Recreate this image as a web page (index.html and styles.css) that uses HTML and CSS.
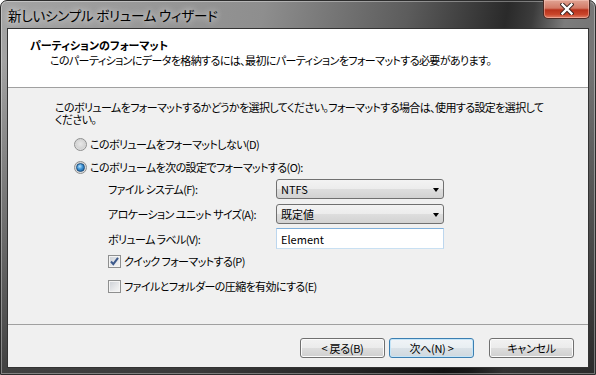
FILE: index.html
```html
<!DOCTYPE html>
<html lang="ja">
<head>
  <meta charset="UTF-8" />
  <title>新しいシンプル ボリューム ウィザード</title>
  <link rel="stylesheet" href="styles.css">
</head>
<body>
  <div class="window">
    <div class="titlebar">
      <span class="title">新しいシンプル ボリューム ウィザード</span>
      <button class="close">
        <svg width="14" height="12" viewBox="0 0 14 12">
          <path d="M2.5 1.5 L11.5 10.5 M11.5 1.5 L2.5 10.5" stroke="#3a2420" stroke-width="4.2" stroke-linecap="square" fill="none"/>
          <path d="M2.5 1.5 L11.5 10.5 M11.5 1.5 L2.5 10.5" stroke="#fff" stroke-width="2.4" stroke-linecap="square" fill="none"/>
        </svg>
      </button>
    </div>

    <div class="client">
      <div class="header">
        <div class="header-title">パーティションのフォーマット</div>
        <div class="header-sub">このパーティションにデータを格納するには、最初にパーティションをフォーマットする必要があります。</div>
      </div>

      <div class="content">
        <p class="intro">このボリュームをフォーマットするかどうかを選択してください。フォーマットする場合は、使用する設定を選択して<br>ください。</p>

        <div class="option"><span class="radio"></span>このボリュームをフォーマットしない(D)</div>
        <div class="option"><span class="radio checked"></span>このボリュームを次の設定でフォーマットする(O):</div>

        <div class="settings">
          <div class="field">
            <span class="field-label">ファイル システム(F):</span>
            <div class="combo">NTFS<span class="arrow"></span></div>
          </div>
          <div class="field">
            <span class="field-label">アロケーション ユニット サイズ(A):</span>
            <div class="combo">既定値<span class="arrow"></span></div>
          </div>
          <div class="field">
            <span class="field-label">ボリューム ラベル(V):</span>
            <div class="textbox">Element</div>
          </div>
        </div>

        <div class="check-row">
          <span class="checkbox">
            <svg width="11" height="11" viewBox="0 0 11 11">
              <path d="M2 5.5 L4.3 8.2 L9 1.8" stroke="#3d5a8c" stroke-width="2" fill="none"/>
            </svg>
          </span>クイック フォーマットする(P)
        </div>
        <div class="check-row"><span class="checkbox"></span>ファイルとフォルダーの圧縮を有効にする(E)</div>
      </div>

      <div class="footer">
        <button class="btn">&lt; 戻る(B)</button>
        <button class="btn default">次へ(N) &gt;</button>
        <button class="btn cancel">キャンセル</button>
      </div>
    </div>
  </div>
</body>
</html>
```

FILE: styles.css
```css
* {
  box-sizing: border-box;
}

body {
  margin: 0;
  font-family: "Noto Sans CJK JP", "Noto Sans", sans-serif;
  font-size: 11px;
  font-feature-settings: "palt";
  letter-spacing: -0.6px;
  color: #000;
  background: #fff;
}

.window {
  width: 596px;
  height: 375px;
  display: flex;
  flex-direction: column;
  padding: 0 6px 6px 6px;
  border: 1px solid #2c2c2c;
  border-radius: 7px 7px 0 0;
  background:
    linear-gradient(180deg, rgba(0,0,0,0) 0, rgba(0,0,0,0) 60px, rgba(0,0,0,0.6) 375px),
    linear-gradient(100deg, #a4a4a4 0%, #8e8e8e 40%, #5c5c5c 62%, #2a2a2a 77%, #3c3c3c 81%, #7c7c7c 86%, #6a6a6a 100%);
  box-shadow: inset 0 0 0 1px rgba(255,255,255,0.35);
}

.titlebar {
  height: 27px;
  display: flex;
  justify-content: space-between;
  align-items: flex-start;
  margin-right: -1px;
}

.title {
  margin-top: 5px;
  padding-left: 1px;
  font-size: 13.5px;
  line-height: 18px;
  letter-spacing: -0.2px;
  color: #000;
  text-shadow: 0 0 6px rgba(255,255,255,0.7), 0 0 10px rgba(255,255,255,0.5);
}

.close {
  width: 47px;
  height: 19px;
  margin-top: -1px;
  padding: 0;
  border: 1px solid #4a2a24;
  border-top: none;
  border-radius: 0 0 5px 5px;
  background: linear-gradient(#e0a494 0, #d37a66 45%, #b8321c 55%, #c9452a 80%, #e0826a 100%);
  box-shadow: inset 0 0 0 1px rgba(255,210,200,0.45);
  display: flex;
  align-items: center;
  justify-content: center;
}

.client {
  flex: 1;
  display: flex;
  flex-direction: column;
  border: 1px solid #333;
  background: #f0f0f0;
}

.header {
  height: 59px;
  padding: 8px 0 0 22px;
  background: #fff;
  border-bottom: 1px solid #a0a0a0;
}

.header-title {
  font-weight: bold;
  line-height: 16px;
  letter-spacing: 0;
}

.header-sub {
  padding-left: 20px;
  line-height: 14px;
}

.content {
  height: 236px;
  padding: 13px 0 0 47px;
}

.intro {
  margin: 0;
  line-height: 12px;
}

.option {
  display: flex;
  align-items: center;
  height: 18px;
  margin: 5px 0 0 19px;
}

.option:first-of-type {
  margin-top: 10px;
}

.radio {
  width: 13px;
  height: 13px;
  margin-right: 3px;
  border: 1px solid #8e8f8f;
  border-radius: 50%;
  background: radial-gradient(circle at 50% 45%, #e8e8e8 0, #d4d4d4 55%, #f4f4f4 100%);
  display: flex;
  align-items: center;
  justify-content: center;
}

.radio.checked::after {
  content: "";
  width: 7px;
  height: 7px;
  border-radius: 50%;
  border: 1px solid #1c4f7e;
  background: radial-gradient(circle at 40% 35%, #b8e4ff 0, #3f93d4 45%, #11508f 100%);
}

.settings {
  display: flex;
  flex-direction: column;
  gap: 5px;
  margin: 3px 0 0 53px;
}

.field {
  display: flex;
  align-items: center;
}

.field-label {
  width: 168px;
}

.combo {
  width: 168px;
  height: 20px;
  padding: 0 4px 0 4px;
  border: 1px solid #707070;
  border-radius: 3px;
  background: linear-gradient(#f3f3f3 0, #ececec 50%, #dedede 50%, #d2d2d2 100%);
  display: flex;
  align-items: center;
  justify-content: space-between;
  letter-spacing: 0;
}

.arrow {
  border-left: 3.5px solid transparent;
  border-right: 3.5px solid transparent;
  border-top: 4px solid #000;
  margin-top: 1px;
}

.textbox {
  width: 168px;
  height: 21px;
  margin-top: -1px;
  padding: 0 4px;
  border: 1px solid;
  border-color: #7fb0dc #bcd6ee #c9e0f2 #bcd6ee;
  background: #fff;
  display: flex;
  align-items: center;
  letter-spacing: 0;
}

.check-row {
  display: flex;
  align-items: center;
  height: 18px;
  margin: 3px 0 0 53px;
}

.check-row + .check-row {
  margin-top: 7px;
}

.checkbox {
  width: 13px;
  height: 13px;
  margin-right: 3px;
  border: 1px solid #8e8f8f;
  background: linear-gradient(135deg, #cbcfd5 0, #e8e9eb 60%, #f7f7f7 100%);
  box-shadow: inset 0 0 0 1px #f4f4f4;
  display: flex;
  align-items: center;
  justify-content: center;
}

.footer {
  flex: 1;
  display: flex;
  justify-content: flex-end;
  align-items: flex-start;
  padding: 13px 14px 0 0;
  border-top: 1px solid #a0a0a0;
}

.btn {
  width: 85px;
  height: 20px;
  margin-left: 4px;
  padding: 0;
  font-family: inherit;
  font-size: 11px;
  font-feature-settings: "palt";
  letter-spacing: -0.3px;
  color: #000;
  border: 1px solid #707070;
  border-radius: 3px;
  background: linear-gradient(#f2f2f2 0, #ebebeb 50%, #dddddd 50%, #cfcfcf 100%);
  box-shadow: inset 0 0 0 1px #fbfbfb;
}

.btn.default {
  border-color: #3c7fb1;
  box-shadow: inset 0 0 0 1px #c4e5f8;
  background: linear-gradient(#f0f4f7 0, #e8eef2 50%, #dae2e8 50%, #cfd8de 100%);
}

.btn.cancel {
  margin-left: 15px;
}
```
